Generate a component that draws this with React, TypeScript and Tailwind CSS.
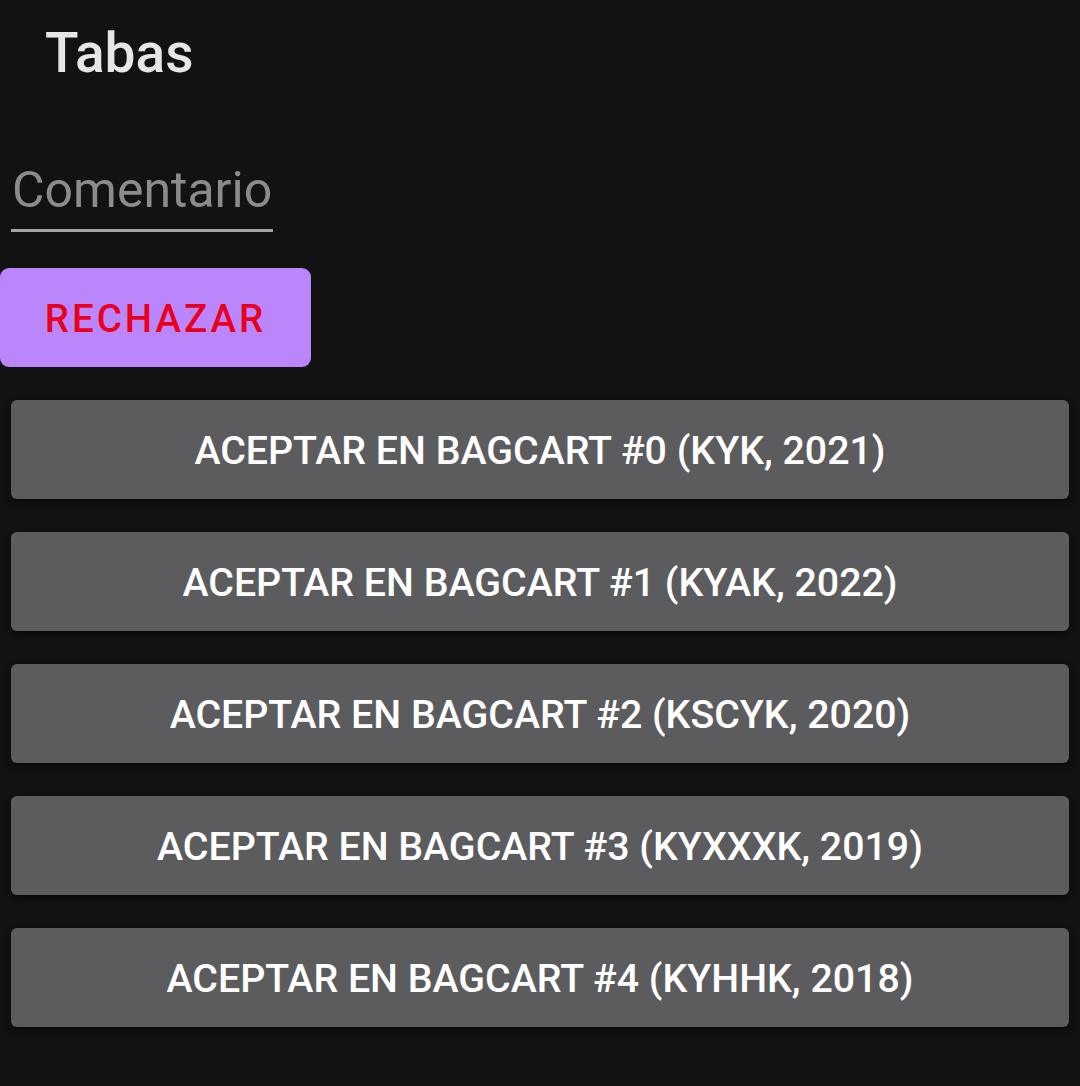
import React from "react";

const items = [
  "ACEPTAR EN BAGCART #0 (KYK, 2021)",
  "ACEPTAR EN BAGCART #1 (KYAK, 2022)",
  "ACEPTAR EN BAGCART #2 (KSCYK, 2020)",
  "ACEPTAR EN BAGCART #3 (KYXXXK, 2019)",
  "ACEPTAR EN BAGCART #4 (KYHHK, 2018)",
];

export default function App() {
  return (
    <div
      className="w-[1080px] h-[1086px] bg-[#121212] overflow-hidden flex flex-col"
      style={{ fontFamily: "Roboto, 'Noto Sans', sans-serif" }}
    >
      <div className="pl-[45px] pt-[20px] h-[160px]">
        <h1 className="text-[55px] leading-[66px] font-medium text-[#e6e6e6]">Tabas</h1>
      </div>
      <div className="pl-[11px] w-[273px]">
        <div className="text-[50px] leading-[60px] text-[#8b8b8b] pl-[1px]">Comentario</div>
        <div className="mt-[9px] h-[3px] bg-[#a5a5a5]" />
      </div>
      <div className="mt-[36px]">
        <button className="w-[311px] h-[99px] pt-[3px] rounded-[9px] bg-[#bb86fc] text-[#e8001d] text-[38.5px] font-medium tracking-[3px] flex items-center justify-center">
          RECHAZAR
        </button>
      </div>
      <div className="mt-[33px] px-[11px] flex flex-col gap-[33px]">
        {items.map((t) => (
          <button
            key={t}
            className="h-[99px] pt-[3px] w-full rounded-[6px] bg-[#5c5c5e] text-white text-[39.3px] font-medium flex items-center justify-center shadow-[0_3px_6px_rgba(0,0,0,0.5)]"
          >
            {t}
          </button>
        ))}
      </div>
    </div>
  );
}
